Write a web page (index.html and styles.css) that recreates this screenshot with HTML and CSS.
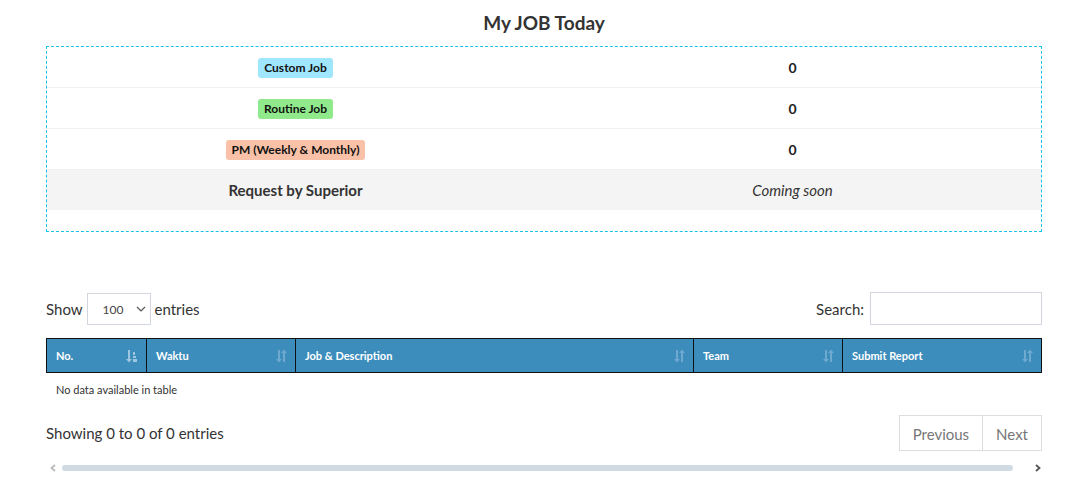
FILE: index.html
```html
<!DOCTYPE html>
<html>
<head>
<meta charset="utf-8">
<link rel="stylesheet" href="styles.css">
</head>
<body>
<div class="page">
  <h2 class="title">My JOB Today</h2>
  <div class="summary">
    <div class="srow">
      <div class="scell"><span class="badge b-custom">Custom Job</span></div>
      <div class="scell num">0</div>
    </div>
    <div class="srow">
      <div class="scell"><span class="badge b-routine">Routine Job</span></div>
      <div class="scell num">0</div>
    </div>
    <div class="srow">
      <div class="scell"><span class="badge b-pm">PM (Weekly &amp; Monthly)</span></div>
      <div class="scell num">0</div>
    </div>
    <div class="srow grey">
      <div class="scell req">Request by Superior</div>
      <div class="scell soon">Coming soon</div>
    </div>
  </div>

  <div class="controls">
    <div class="length">Show <span class="select">100 <svg class="chev" width="10" height="6" viewBox="0 0 10 6"><path d="M1 1l4 4 4-4" fill="none" stroke="#555" stroke-width="1.2"/></svg></span> entries</div>
    <div class="search">Search: <span class="input"></span></div>
  </div>

  <div class="thead">
    <div class="th c1">No. <svg class="sort" width="12" height="14" viewBox="0 0 12 14"><path d="M2 1h2v9h2l-3 3.5L0 10h2z" fill="#9ec6e0"/><path d="M7 3h2v3H7zM7 7h3v2H7zM7 10h4v3H7z" fill="#9ec6e0"/></svg></div>
    <div class="th c2">Waktu <svg class="sort dim" width="12" height="14" viewBox="0 0 12 14"><path d="M3 1v9H1l3 3.5L7 10H5V1z" fill="#6fa9d0"/><path d="M8 13V4H6l3-3.5L12 4h-2v9z" fill="#6fa9d0"/></svg></div>
    <div class="th c3">Job &amp; Description <svg class="sort dim" width="12" height="14" viewBox="0 0 12 14"><path d="M3 1v9H1l3 3.5L7 10H5V1z" fill="#6fa9d0"/><path d="M8 13V4H6l3-3.5L12 4h-2v9z" fill="#6fa9d0"/></svg></div>
    <div class="th c4">Team <svg class="sort dim" width="12" height="14" viewBox="0 0 12 14"><path d="M3 1v9H1l3 3.5L7 10H5V1z" fill="#6fa9d0"/><path d="M8 13V4H6l3-3.5L12 4h-2v9z" fill="#6fa9d0"/></svg></div>
    <div class="th c5">Submit Report <svg class="sort dim" width="12" height="14" viewBox="0 0 12 14"><path d="M3 1v9H1l3 3.5L7 10H5V1z" fill="#6fa9d0"/><path d="M8 13V4H6l3-3.5L12 4h-2v9z" fill="#6fa9d0"/></svg></div>
  </div>
  <div class="empty">No data available in table</div>

  <div class="footer">
    <div class="info">Showing 0 to 0 of 0 entries</div>
    <div class="pager"><span class="pbtn">Previous</span><span class="pbtn">Next</span></div>
  </div>

  <div class="scrollbar">
    <svg width="8" height="8" viewBox="0 0 8 8"><path d="M6 1L2.5 4 6 7" fill="none" stroke="#bbb" stroke-width="1.8"/></svg>
    <div class="track"></div>
    <svg width="8" height="8" viewBox="0 0 8 8"><path d="M2 1l3.5 3L2 7" fill="none" stroke="#555" stroke-width="1.8"/></svg>
  </div>
</div>
</body>
</html>
```

FILE: styles.css
```css
html, body { margin: 0; padding: 0; background: #fff; }
body { font-family: "Lato", "Liberation Sans", sans-serif; color: #333; }
.page { width: 996px; margin-left: 46px; padding-top: 11px; }
.title { margin: 0; text-align: center; font-size: 19px; font-weight: 700; line-height: 24px; color: #333; }
.summary { margin-top: 11px; border: 1px dashed #17c1e8; height: 186px; box-sizing: border-box; }
.srow { display: flex; height: 41px; box-sizing: border-box; border-bottom: 1px solid #f0f0f0; align-items: center; }
.srow.grey { background: #f4f4f4; border-bottom: 0; height: 40px; }
.scell { flex: 1; text-align: center; }
.badge { display: inline-block; font-size: 12px; font-weight: 700; color: #111; padding: 2px 6px; line-height: 16px; border-radius: 3px; }
.b-custom { background: #a0e6fd; }
.b-routine { background: #90ea8b; }
.b-pm { background: #f9c1a7; }
.num { font-size: 14px; font-weight: 700; color: #222; }
.req { font-size: 15px; font-weight: 700; color: #333; }
.soon { font-size: 15px; font-style: italic; color: #333; }
.controls { margin-top: 60px; display: flex; justify-content: space-between; align-items: center; font-size: 15px; color: #333; }
.length, .search { display: flex; align-items: center; gap: 4px; }
.select { display: inline-flex; align-items: center; justify-content: space-between; width: 64px; height: 32px; box-sizing: border-box; border: 1px solid #d2d6de; padding: 2px 4px 0 15px; font-size: 12px; color: #444; }
.chev { margin-top: -2px; }
.input { display: inline-block; width: 172px; height: 33px; box-sizing: border-box; border: 1px solid #d2d6de; margin-left: 2px; }
.thead { margin-top: 13px; display: flex; height: 35px; background: #3c8dbc; border: 1px solid #111; box-sizing: border-box; }
.th { display: flex; align-items: center; justify-content: space-between; padding: 0 8px 0 9px; color: #fff; font-size: 11px; font-weight: 700; border-right: 1px solid #111; box-sizing: border-box; }
.th:last-child { border-right: 0; }
.c1 { width: 100px; }
.c2 { width: 149px; }
.c3 { width: 398px; }
.c4 { width: 149px; }
.c5 { flex: 1; }
.empty { font-size: 11px; color: #333; padding: 10px 10px 0; line-height: 14px; }
.footer { margin-top: 18px; display: flex; justify-content: space-between; align-items: center; }
.info { font-size: 15px; color: #333; }
.pager { display: flex; }
.pbtn { display: inline-block; height: 36px; line-height: 36px; padding: 0 13px; border: 1px solid #ddd; font-size: 15px; color: #777; box-sizing: border-box; }
.pbtn + .pbtn { border-left: 0; }
.scrollbar { display: flex; align-items: center; gap: 5px; margin-top: 12px; padding-left: 3px; height: 10px; }
.track { width: 952px; height: 6px; border-radius: 3px; background: #d0dae3; margin-right: 16px; }
```
